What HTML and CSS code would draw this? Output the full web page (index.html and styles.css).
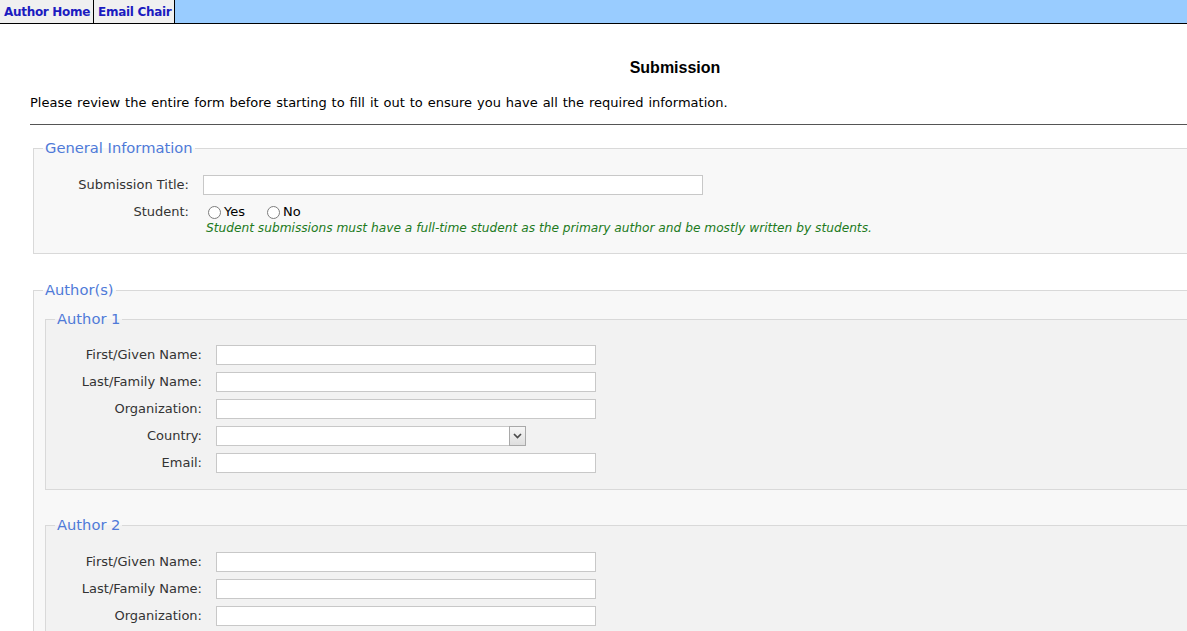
FILE: index.html
```html
<!DOCTYPE html>
<html lang="en">
<head>
<meta charset="utf-8">
<title>Submission</title>
<link rel="stylesheet" href="styles.css">
</head>
<body>
<nav class="topnav">
  <a class="tab" href="#">Author Home</a>
  <a class="tab" href="#">Email Chair</a>
</nav>
<main class="page">
  <h1 class="title">Submission</h1>
  <p class="intro">Please review the entire form before starting to fill it out to ensure you have all the required information.</p>
  <div class="rule"></div>

  <fieldset class="box box-general">
    <legend>General Information</legend>
    <div class="form-grid general-grid">
      <label class="lbl" for="sub-title">Submission Title:</label>
      <input class="txt txt-wide" id="sub-title" type="text">
      <span class="lbl lbl-top">Student:</span>
      <div class="student">
        <div class="radios">
          <label class="radio"><input type="radio" name="student">Yes</label>
          <label class="radio"><input type="radio" name="student">No</label>
        </div>
        <div class="note">Student submissions must have a full-time student as the primary author and be mostly written by students.</div>
      </div>
    </div>
  </fieldset>

  <fieldset class="box box-authors">
    <legend>Author(s)</legend>

    <fieldset class="box box-author">
      <legend>Author 1</legend>
      <div class="form-grid author-grid">
        <label class="lbl" for="a1-first">First/Given Name:</label>
        <input class="txt txt-med" id="a1-first" type="text">
        <label class="lbl" for="a1-last">Last/Family Name:</label>
        <input class="txt txt-med" id="a1-last" type="text">
        <label class="lbl" for="a1-org">Organization:</label>
        <input class="txt txt-med" id="a1-org" type="text">
        <label class="lbl" for="a1-country">Country:</label>
        <div class="select">
          <select id="a1-country"><option></option></select>
          <span class="select-btn"><svg width="9" height="6" viewBox="0 0 9 6"><path d="M1 1 L4.5 4.5 L8 1" fill="none" stroke="#4a4a4a" stroke-width="1.7"/></svg></span>
        </div>
        <label class="lbl" for="a1-email">Email:</label>
        <input class="txt txt-med" id="a1-email" type="text">
      </div>
    </fieldset>

    <fieldset class="box box-author">
      <legend>Author 2</legend>
      <div class="form-grid author-grid">
        <label class="lbl" for="a2-first">First/Given Name:</label>
        <input class="txt txt-med" id="a2-first" type="text">
        <label class="lbl" for="a2-last">Last/Family Name:</label>
        <input class="txt txt-med" id="a2-last" type="text">
        <label class="lbl" for="a2-org">Organization:</label>
        <input class="txt txt-med" id="a2-org" type="text">
        <label class="lbl" for="a2-country">Country:</label>
        <div class="select">
          <select id="a2-country"><option></option></select>
          <span class="select-btn"><svg width="9" height="6" viewBox="0 0 9 6"><path d="M1 1 L4.5 4.5 L8 1" fill="none" stroke="#4a4a4a" stroke-width="1.7"/></svg></span>
        </div>
        <label class="lbl" for="a2-email">Email:</label>
        <input class="txt txt-med" id="a2-email" type="text">
      </div>
    </fieldset>
  </fieldset>
</main>
</body>
</html>
```

FILE: styles.css
```css
html {
  scrollbar-width: none;
}
html::-webkit-scrollbar {
  display: none;
}
body {
  margin: 0;
  font-family: "DejaVu Sans", Verdana, sans-serif;
  font-size: 13px;
  color: #000;
  background: #fff;
  overflow-x: hidden;
}

/* top navigation */
.topnav {
  display: flex;
  height: 23px;
  background: #99ccff;
  border-bottom: 1px solid #000;
}
.tab {
  display: block;
  padding: 2px 3px 0 4px;
  background: #f0f0f0;
  border-right: 1px solid #000;
  color: #1c1cc0;
  font-weight: bold;
  font-size: 12px;
  letter-spacing: -0.3px;
  line-height: 21px;
  text-decoration: none;
}

/* page */
.page {
  margin-left: 30px;
  width: 1290px;
}
.title {
  margin: 34px 0 0;
  font: bold 16px/20px "Liberation Sans", Arial, sans-serif;
  text-align: center;
}
.intro {
  margin: 17px 0 0;
  line-height: 16px;
  word-spacing: 0.8px;
}
.rule {
  margin-top: 13px;
  border-top: 1px solid #555;
}

/* fieldsets */
.box {
  margin: 0 0 0 3px;
  padding: 0;
  border: 1px solid #d9d9d9;
  background: #f8f8f8;
  min-width: 0;
}
.box > legend {
  margin-left: 9px;
  padding: 0 2px;
  font-size: 14.7px;
  line-height: 18px;
  color: #4f7ad8;
}
.box-general {
  margin-top: 14px;
}
.box-authors {
  margin-top: 27px;
}
.box-author {
  margin: 11px 0 0 11px;
  background: #f2f2f2;
}
.box-author + .box-author {
  margin-top: 26px;
}

/* form grids */
.form-grid {
  display: grid;
  grid-template-columns: 155px auto;
  column-gap: 14px;
  row-gap: 7px;
  align-items: center;
  justify-items: start;
}
.general-grid {
  row-gap: 9px;
  padding: 18px 0 17px;
}
.author-grid {
  grid-template-columns: 156px auto;
  padding: 17px 0 16px;
}
.box-author + .box-author .author-grid {
  padding-top: 18px;
}
.lbl {
  justify-self: end;
  color: #333;
  line-height: 20px;
}
.lbl-top {
  align-self: start;
  line-height: 16px;
}

.txt {
  box-sizing: border-box;
  height: 20px;
  margin: 0;
  padding: 0 2px;
  border: 1px solid #c8c8c8;
  background: #fff;
  font: inherit;
}
.txt-wide {
  width: 500px;
}
.txt-med {
  width: 380px;
}

.select {
  position: relative;
  width: 310px;
  height: 20px;
}
.select select {
  appearance: none;
  box-sizing: border-box;
  width: 100%;
  height: 100%;
  margin: 0;
  border: 1px solid #c8c8c8;
  background: #fff;
  font: inherit;
}
.select-btn {
  position: absolute;
  top: 0;
  right: 0;
  box-sizing: border-box;
  width: 17px;
  height: 20px;
  border: 1px solid #a9a9a9;
  background: linear-gradient(#f6f6f6, #dedede);
  display: flex;
  align-items: center;
  justify-content: center;
  pointer-events: none;
}

/* student radios */
.radios {
  display: flex;
  line-height: 16px;
}
.radio {
  display: inline-flex;
  align-items: center;
  margin-right: 17px;
  color: #000;
}
.radio input {
  appearance: none;
  width: 13px;
  height: 13px;
  margin: 0 3px 0 5px;
  border: 1px solid #7d7d7d;
  border-radius: 50%;
  background: #fff;
}
.note {
  margin-left: 3px;
  color: #217a21;
  font-size: 12.2px;
  font-style: italic;
  line-height: 16px;
}
```
